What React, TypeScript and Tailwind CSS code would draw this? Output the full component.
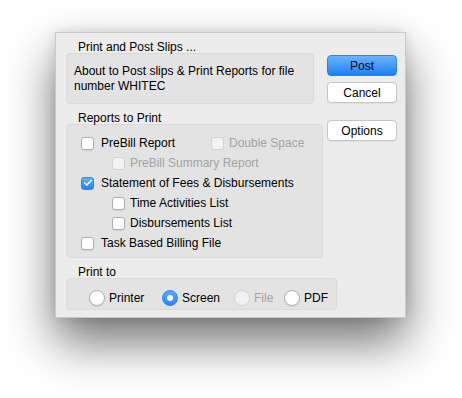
import { Check } from "lucide-react";

const font = { fontFamily: '"Liberation Sans", Arial, sans-serif' };

const CheckBox = ({ checked = false, disabled = false }: { checked?: boolean; disabled?: boolean }) => {
  if (checked) {
    return (
      <span className="flex h-[13px] w-[13px] shrink-0 items-center justify-center rounded-[3px] border border-[#2f86ee] bg-gradient-to-b from-[#68b1fb] to-[#1a7ff5]">
        <Check className="h-[10px] w-[10px] text-white" strokeWidth={3.5} />
      </span>
    );
  }
  return (
    <span
      className={
        disabled
          ? "h-[13px] w-[13px] shrink-0 rounded-[3px] border border-[#d2d2d2] bg-[#f3f3f3]"
          : "h-[13px] w-[13px] shrink-0 rounded-[3px] border border-[#aeaeae] bg-white shadow-[0_1px_1px_rgba(0,0,0,0.08)]"
      }
    />
  );
};

const Radio = ({ checked = false, disabled = false }: { checked?: boolean; disabled?: boolean }) => {
  if (checked) {
    return (
      <span className="flex h-[16px] w-[16px] shrink-0 items-center justify-center rounded-full border border-[#2f86ee] bg-gradient-to-b from-[#5aaafb] to-[#2489f6]">
        <span className="h-[6px] w-[6px] rounded-full bg-white" />
      </span>
    );
  }
  return (
    <span
      className={
        disabled
          ? "h-[16px] w-[16px] shrink-0 rounded-full border border-[#d4d4d4] bg-[#f1f1f1]"
          : "h-[16px] w-[16px] shrink-0 rounded-full border border-[#b0b0b0] bg-white shadow-[0_1px_1px_rgba(0,0,0,0.08)]"
      }
    />
  );
};

const Label = ({ text }: { text: string }) => (
  <div className="h-[20px] pl-[12px] pt-[6px] text-[12px] leading-[16px] text-black">{text}</div>
);

const Button = ({ text, primary = false }: { text: string; primary?: boolean }) => (
  <div
    className={
      primary
        ? "flex h-[21px] w-[70px] items-center justify-center rounded-[4px] border border-[#2a82ec] bg-gradient-to-b from-[#6ab3fb] to-[#1580f4] text-[12px] text-black"
        : "flex h-[21px] w-[70px] items-center justify-center rounded-[4px] border border-[#c6c6c6] bg-white text-[12px] text-black shadow-[0_1px_1px_rgba(0,0,0,0.06)]"
    }
  >
    {text}
  </div>
);

const Row = ({ indent, children }: { indent: number; children: React.ReactNode }) => (
  <div className="flex h-[20px] items-center" style={{ paddingLeft: indent }}>
    {children}
  </div>
);

export default function App() {
  return (
    <div className="h-[398px] w-[462px] overflow-hidden bg-white pl-[55px] pt-[32px]" style={font}>
      <div className="flex h-[286px] w-[351px] border border-[#c9c9c9] bg-[#ececec] shadow-[0_24px_45px_rgba(0,0,0,0.55),0_0_12px_rgba(0,0,0,0.12)]">
        {/* groups */}
        <div className="w-[262px] shrink-0 pl-[10px]">
          <Label text="Print and Post Slips ..." />
          <div className="h-[51px] w-[248px] rounded-[4px] border border-[#dadada] bg-[#e3e3e3] pl-[7px] pt-[10px] text-[12px] leading-[15px] text-black">
            About to Post slips &amp; Print Reports for file
            <br />
            number WHITEC
          </div>

          <Label text="Reports to Print" />
          <div className="h-[134px] w-[257px] rounded-[4px] border border-[#dadada] bg-[#e3e3e3] pt-[8px] text-[12px] text-black">
            <Row indent={14}>
              <CheckBox />
              <span className="ml-[7px] w-[110px]">PreBill Report</span>
              <CheckBox disabled />
              <span className="ml-[5px] text-[#a2a2a2]">Double Space</span>
            </Row>
            <Row indent={45}>
              <CheckBox disabled />
              <span className="ml-[5px] text-[#a2a2a2]">PreBill Summary Report</span>
            </Row>
            <Row indent={14}>
              <CheckBox checked />
              <span className="ml-[7px]">Statement of Fees &amp; Disbursements</span>
            </Row>
            <Row indent={45}>
              <CheckBox />
              <span className="ml-[5px]">Time Activities List</span>
            </Row>
            <Row indent={45}>
              <CheckBox />
              <span className="ml-[5px]">Disbursements List</span>
            </Row>
            <Row indent={14}>
              <CheckBox />
              <span className="ml-[7px]">Task Based Billing File</span>
            </Row>
          </div>

          <Label text="Print to" />
          <div className="flex h-[32px] w-[271px] items-start rounded-[4px] border border-[#dadada] bg-[#e3e3e3] pl-[22px] pt-[10px] text-[12px] text-black">
            <div className="flex w-[73px] items-center">
              <Radio />
              <span className="ml-[4px]">Printer</span>
            </div>
            <div className="flex w-[72px] items-center">
              <Radio checked />
              <span className="ml-[4px]">Screen</span>
            </div>
            <div className="flex w-[50px] items-center">
              <Radio disabled />
              <span className="ml-[4px] text-[#a2a2a2]">File</span>
            </div>
            <div className="flex items-center">
              <Radio />
              <span className="ml-[4px]">PDF</span>
            </div>
          </div>
        </div>

        {/* buttons */}
        <div className="ml-auto flex flex-col pr-[8px] pt-[22px]">
          <Button text="Post" primary />
          <div className="h-[6px]" />
          <Button text="Cancel" />
          <div className="h-[17px]" />
          <Button text="Options" />
        </div>
      </div>
    </div>
  );
}
